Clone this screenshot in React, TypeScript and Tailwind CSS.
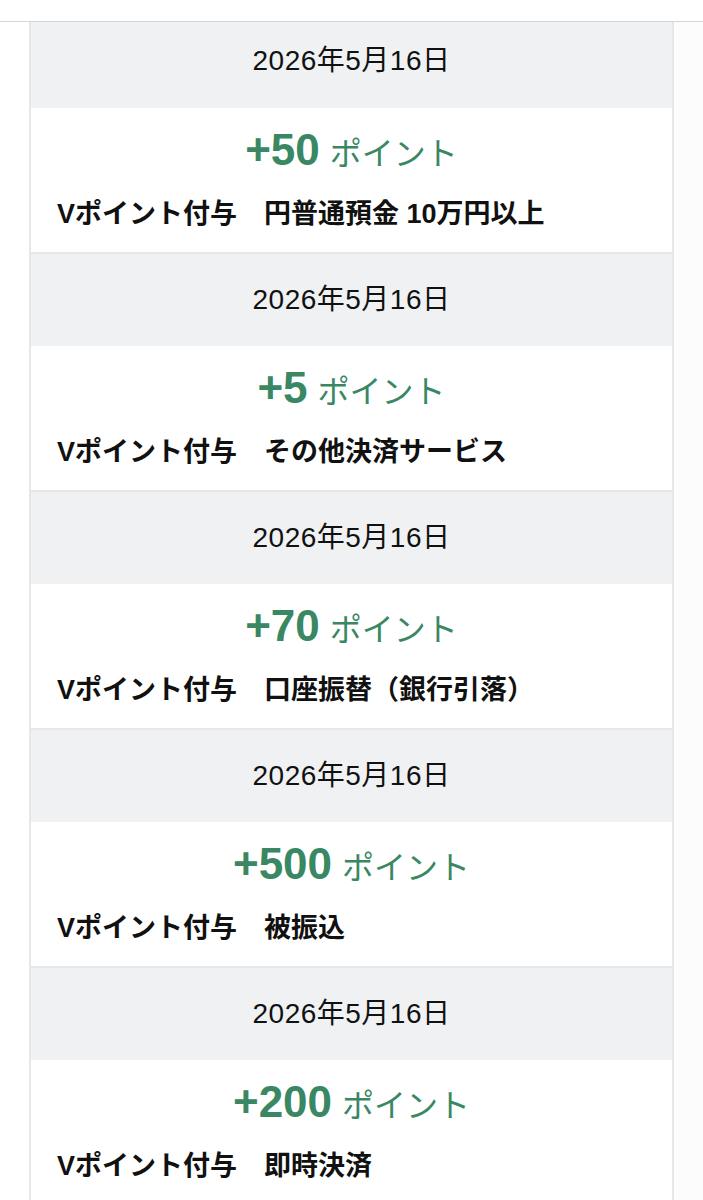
const items = [
  { points: 50, label: 'Vポイント付与　円普通預金 10万円以上' },
  { points: 5, label: 'Vポイント付与　その他決済サービス' },
  { points: 70, label: 'Vポイント付与　口座振替（銀行引落）' },
  { points: 500, label: 'Vポイント付与　被振込' },
  { points: 200, label: 'Vポイント付与　即時決済' },
]

const font = { fontFamily: '"Liberation Sans", "Noto Sans CJK JP", sans-serif' }

export default function App() {
  return (
    <div className="w-[703px] h-[1200px] overflow-hidden bg-white text-[#111]" style={font}>
      <div className="h-[22px] border-b border-[#d6d6d8] bg-white" />
      <div className="flex">
        <div className="w-[29px] shrink-0 bg-white" />
        <div className="w-[645px] shrink-0 border-x-2 border-[#e6e7ea]">
          {items.map((item, i) => (
            <div key={i}>
              <div
                className={
                  i === 0
                    ? 'h-[86px] bg-[#f0f1f3] flex items-center justify-center pb-[8px]'
                    : 'h-[94px] bg-[#f0f1f3] border-t-2 border-[#e6e7ea] flex items-center justify-center'
                }
              >
                <span className="text-[28px] tracking-[0.5px]">2026年5月16日</span>
              </div>
              <div className="bg-white pt-[20px] pb-[22px]">
                <div className="h-[44px] overflow-visible flex items-baseline justify-center gap-[10px] text-[#3a8763]">
                  <span className="text-[44px] leading-[44px] font-bold">+{item.points}</span>
                  <span className="text-[32px] leading-[44px]">ポイント</span>
                </div>
                <div className="mt-[26px] pl-[26px] text-[27px] leading-[32px] font-bold">{item.label}</div>
              </div>
            </div>
          ))}
        </div>
        <div className="flex-1 bg-[#fcfcfd]" />
      </div>
    </div>
  )
}
